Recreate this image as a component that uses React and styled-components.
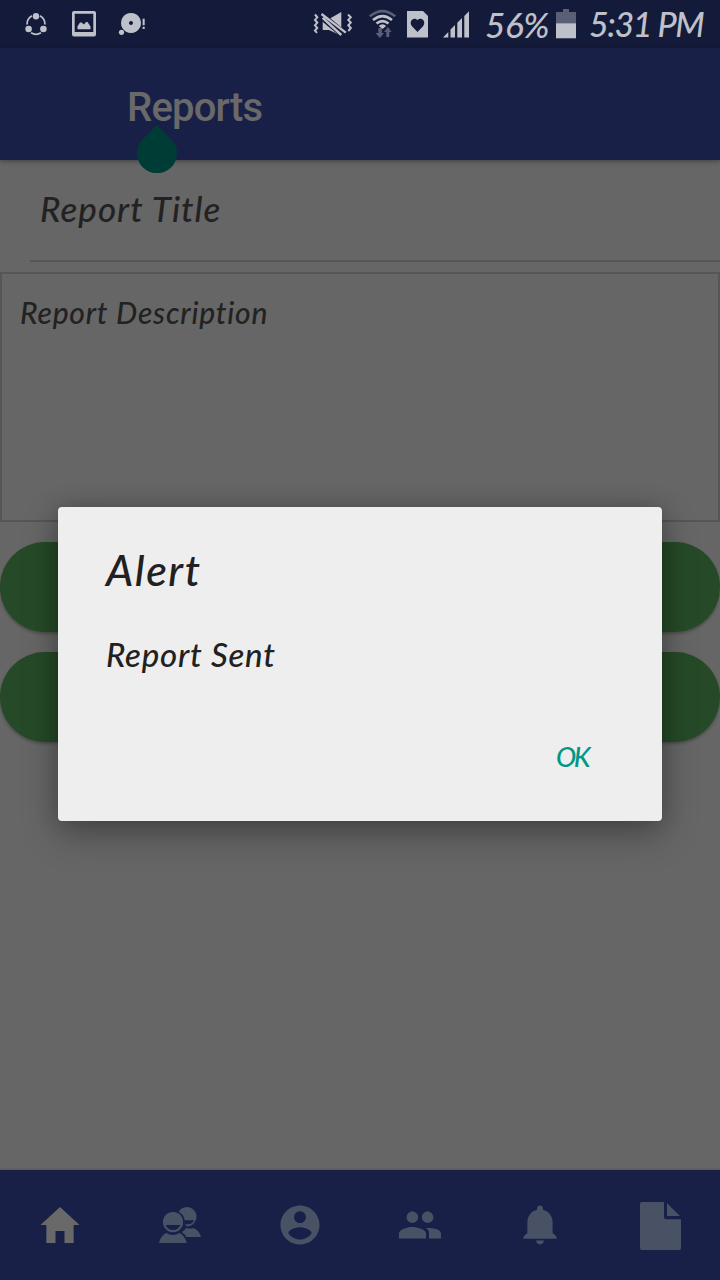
import React from 'react';
import styled, { createGlobalStyle } from 'styled-components';
import { IoMdHome, IoMdContact, IoMdPeople, IoMdNotifications } from 'react-icons/io';

const GlobalStyle = createGlobalStyle`
  *, *::before, *::after { box-sizing: border-box; }
  body { margin: 0; background: #666666; font-family: Roboto, sans-serif; }
`;

const Screen = styled.div`
  position: relative;
  width: 720px;
  height: 1280px;
  display: flex;
  flex-direction: column;
  overflow: hidden;
  background: #666666;
`;

const Script = styled.span`
  display: block;
  font-family: Lato, sans-serif;
  font-style: italic;
  font-weight: 500;
  font-size: ${({ $size }) => $size}px;
  line-height: ${({ $line }) => $line}px;
  letter-spacing: ${({ $spacing }) => $spacing || 0}px;
  font-variant-ligatures: none;
  color: ${({ $color }) => $color || '#222222'};
  white-space: nowrap;
`;

const StatusBar = styled.header`
  flex: none;
  height: 48px;
  display: flex;
  align-items: center;
  justify-content: space-between;
  padding: 0 15px 0 24px;
  background: #141a39;
  color: #bfc1ca;
`;

const StatusGroup = styled.div`
  display: flex;
  align-items: center;
  gap: ${({ $gap }) => $gap}px;
`;

const Glyph = styled.svg`
  display: block;
  flex: none;
  fill: currentColor;
`;

const Percent = styled.div`
  width: 71px;
  padding-left: 15px;
`;

const Clock = styled.div`
  width: 129px;
  padding-left: 13px;
`;

const AppBar = styled.div`
  flex: none;
  position: relative;
  z-index: 1;
  height: 112px;
  padding: 36px 0 0 127px;
  background: #192048;
  box-shadow: 0 1px 5px rgba(0, 0, 0, 0.4);
`;

const Title = styled.h1`
  margin: 0;
  font: 500 40px/47px Roboto, sans-serif;
  letter-spacing: -0.8px;
  color: #696969;
`;

const CursorHandle = styled.svg`
  position: absolute;
  left: 137px;
  top: 77px;
  fill: #003c36;
`;

const Form = styled.main`
  flex: 1;
  display: flex;
  flex-direction: column;
`;

const TitleField = styled.div`
  height: 102px;
  margin-left: 30px;
  padding: 27px 0 0 10px;
  border-bottom: 2px solid #555555;
`;

const DescriptionField = styled.div`
  height: 250px;
  margin-top: 10px;
  padding: 18px;
  border: 2px solid #555555;
`;

const PillButton = styled.button`
  height: 90px;
  margin: 20px 0 0;
  padding: 0;
  border: 0;
  border-radius: 45px;
  background: #264a27;
  box-shadow: 0 2px 3px rgba(0, 0, 0, 0.25);
`;

const Dialog = styled.section`
  position: absolute;
  z-index: 2;
  left: 58px;
  top: 507px;
  width: 604px;
  height: 314px;
  display: flex;
  flex-direction: column;
  padding: 37px 48px 34px;
  border-radius: 4px;
  background: #eeeeee;
  box-shadow: 0 14px 36px rgba(0, 0, 0, 0.28), 0 0 22px rgba(0, 0, 0, 0.2);
`;

const Message = styled.div`
  margin-top: 34px;
`;

const DialogAction = styled.button`
  align-self: flex-end;
  margin: auto 26px 12px 0;
  padding: 0;
  border: 0;
  background: none;
`;

const TabBar = styled.nav`
  flex: none;
  height: 110px;
  display: grid;
  grid-template-columns: repeat(6, 1fr);
  background: #192048;
  box-shadow: 0 -1px 2px rgba(0, 0, 0, 0.15);
`;

const Tab = styled.div`
  display: flex;
  align-items: center;
  justify-content: center;
  color: ${({ $active }) => ($active ? '#696969' : '#485264')};
`;

const ShareIcon = () => (
  <Glyph width="24" height="26" viewBox="24 11 24 26">
    <circle cx="36" cy="16.3" r="3.2" />
    <circle cx="28.6" cy="29" r="3.3" />
    <circle cx="43.4" cy="29" r="3.3" />
    <g fill="none" stroke="currentColor" strokeWidth="1.7">
      <path d="M32 15.8A10 10 0 0 0 27 24.5" />
      <path d="M40 15.8A10 10 0 0 1 45 24.5" />
      <path d="M31 32.8A9.5 9.5 0 0 0 41 32.8" />
    </g>
  </Glyph>
);

const PictureIcon = () => (
  <Glyph width="24" height="26" viewBox="0 0 24 26">
    <path fillRule="evenodd" d="M2 0H22Q24 0 24 2V23.5Q24 25.5 22 25.5H2Q0 25.5 0 23.5V2Q0 0 2 0ZM2.7 2.7V21H21.3V2.7Z" />
    <path d="M5.5 18.2V15.3L8 11.5H9.5L12 13.6L14 11H15.5L18.5 15.5V18.2Z" />
  </Glyph>
);

const DiscIcon = () => (
  <Glyph width="28" height="26" viewBox="118 11 28 26">
    <path fillRule="evenodd" d="M131 13a10 10 0 1 0 .01 0ZM131 21a2 2 0 1 1-.01 0Z" />
    <circle cx="121.5" cy="32.3" r="2.6" />
    <path d="M142.6 18.8h2.1v6.4h-2.1zM142.6 26.8h2.1v2.2h-2.1z" />
  </Glyph>
);

const MuteIcon = () => (
  <Glyph width="40" height="26" viewBox="313 11 40 26">
    <path d="M322.7 19H329L341.3 12V35.8L329 30H322.7Z" />
    <path d="M320.5 15L345 35.5" stroke="#141a39" strokeWidth="7.5" />
    <path d="M321.5 14L345.8 32.6M322.7 17.8L341.3 35" stroke="currentColor" strokeWidth="2.4" fill="none" />
    <path d="M315 14.5l2.3 2.8-2.3 2.6 2.3 2.7-2.3 2.7 2.3 2.7-2.3 2.6 2 2.2M348 14.5l2.8 2.8-2.5 2.6 2.5 2.7-2.5 2.7 2.5 2.7-2.5 3" fill="none" stroke="currentColor" strokeWidth="2" />
  </Glyph>
);

const WifiIcon = () => (
  <Glyph width="28" height="30" viewBox="369 9 28 30">
    <g fill="none" strokeWidth="2.6">
      <path d="M369.8 16.3Q382.5 5.8 395.2 16.3" stroke="#5b5f76" />
      <path d="M373 20Q382.5 12.2 392 20M376.5 23.6Q382.5 18.6 388.5 23.6" stroke="currentColor" />
    </g>
    <path d="M378.8 26Q382.5 22.7 386.2 26L382.5 29Z" />
    <path d="M378.3 28H381.8V33H384L380 38L375.5 33H378.3ZM386.3 37V32H384L388 27L391.5 32H389.3V37Z" fill="#5b5f76" />
  </Glyph>
);

const HeartCardIcon = () => (
  <Glyph width="21" height="27" viewBox="0 0 21 27">
    <path d="M0 0H16L21 5V26.5H0Z" />
    <path d="M10.5 21L5 15.2C1.5 10.8 6 5 10.5 9C15 5 19.5 10.8 16 15.2Z" fill="#141a39" />
  </Glyph>
);

const SignalIcon = () => (
  <Glyph width="27" height="27" viewBox="443 11 27 27">
    <path d="M443 37.5L448.3 32V37.5ZM450.5 37.5V29.5L455 25V37.5ZM457.3 37.5V22.8L462 18V37.5ZM464.3 37.5V16L469 11.3V37.5Z" />
  </Glyph>
);

const BatteryIcon = () => (
  <Glyph width="20" height="30" viewBox="0 0.7 20 30">
    <path d="M7 0.7H13V3.7H20V15.5H0V3.7H7Z" fill="#5b5f76" />
    <path d="M0 15H20V30H0Z" />
  </Glyph>
);

const FriendsIcon = () => (
  <Glyph width="48" height="48" viewBox="0 0 144 144">
    <path d="M68 32A29 29 0 1 1 91 76L87 68Q91 71 97 70Q110 69 114 58H86Q83 39 68 32Z" />
    <path d="M80 91Q87 88 90 81Q101 84 112 81Q129 87 135 108H91Q88 99 79 95Z" />
    <path fillRule="evenodd" d="M51 33A30.5 30.5 0 1 0 51.1 33ZM29 72H73Q67 87 51 87Q35 87 29 72Z" />
    <path d="M9 126Q14 104 31 96Q51 108 70 96Q87 104 92 126Z" />
  </Glyph>
);

const FileIcon = () => (
  <Glyph width="42" height="50" viewBox="-1 -2 42 50">
    <path d="M2 0H24V15Q24 17.3 26 17.3H41V46Q41 48 39 48H2Q0 48 0 46V2Q0 0 2 0Z" />
    <path d="M27 1.2L40 14H27Z" />
  </Glyph>
);

export default function App() {
  return (
    <>
      <GlobalStyle />
      <Screen>
        <StatusBar>
          <StatusGroup $gap={22}>
            <StatusGroup $gap={24}>
              <ShareIcon />
              <PictureIcon />
            </StatusGroup>
            <DiscIcon />
          </StatusGroup>
          <StatusGroup $gap={0}>
            <StatusGroup $gap={15}>
              <StatusGroup $gap={16}>
                <MuteIcon />
                <StatusGroup $gap={10}>
                  <WifiIcon />
                  <HeartCardIcon />
                </StatusGroup>
              </StatusGroup>
              <SignalIcon />
            </StatusGroup>
            <StatusGroup $gap={15}>
              <Percent><Script $size={35} $line={46} $spacing={-0.3} $color="#bfc1ca">56%</Script></Percent>
              <BatteryIcon />
            </StatusGroup>
            <Clock><Script $size={34} $line={46} $spacing={-1.4} $color="#bfc1ca">5:31 PM</Script></Clock>
          </StatusGroup>
        </StatusBar>
        <AppBar>
          <Title>Reports</Title>
          <CursorHandle width="40" height="48" viewBox="0 0 40 48">
            <path d="M20 0L34.5 14.5A20 20 0 1 1 5.5 14.5Z" />
          </CursorHandle>
        </AppBar>
        <Form>
          <TitleField><Script $size={35} $line={42} $spacing={1}>Report Title</Script></TitleField>
          <DescriptionField><Script $size={30} $line={40} $spacing={0.77}>Report Description</Script></DescriptionField>
          <PillButton aria-label="Send report" />
          <PillButton aria-label="View reports" />
        </Form>
        <TabBar>
          <Tab $active><IoMdHome size={48} /></Tab>
          <Tab><FriendsIcon /></Tab>
          <Tab><IoMdContact size={48} /></Tab>
          <Tab><IoMdPeople size={48} /></Tab>
          <Tab><IoMdNotifications size={48} /></Tab>
          <Tab><FileIcon /></Tab>
        </TabBar>
        <Dialog role="alertdialog">
          <Script $size={43} $line={52} $spacing={1.5} $color="#212121">Alert</Script>
          <Message><Script $size={33} $line={48} $spacing={0.75} $color="#212121">Report Sent</Script></Message>
          <DialogAction><Script $size={27} $line={36} $spacing={-2.5} $color="#009688">OK</Script></DialogAction>
        </Dialog>
      </Screen>
    </>
  );
}
